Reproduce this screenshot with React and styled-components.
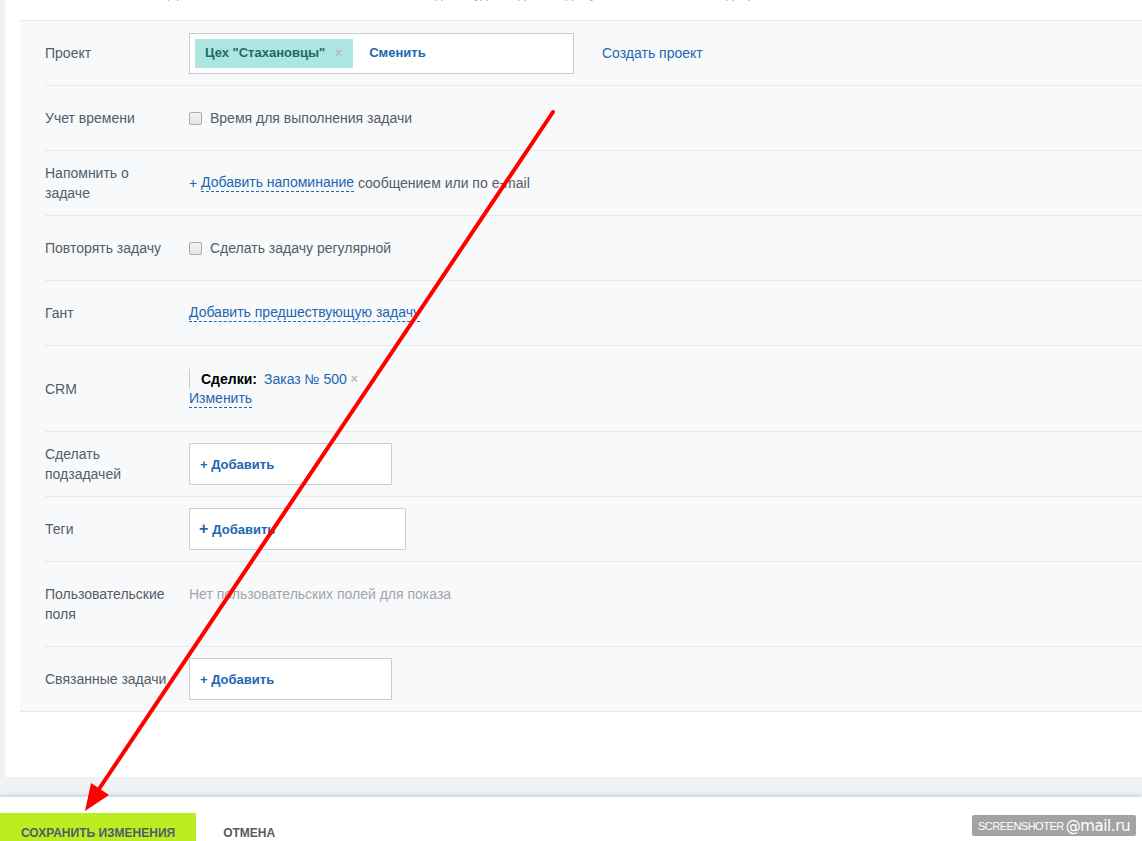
import React from "react";
import styled, { createGlobalStyle } from "styled-components";

const GlobalStyle = createGlobalStyle`
  html, body {
    margin: 0;
    padding: 0;
    background: #eef2f4;
    font-family: "Liberation Sans", Arial, "Helvetica Neue", sans-serif;
    font-size: 14px;
    color: #535c69;
    overflow: hidden;
  }
  * { box-sizing: border-box; }
`;

const Page = styled.div`
  position: relative;
  display: flex;
  flex-direction: column;
  height: 841px;
  overflow: hidden;
`;

const Workarea = styled.div`
  padding: 0 0 20px 5px;
`;

const Card = styled.div`
  background: #fff;
  padding: 0 0 65px 15px;
`;

const Hint = styled.div`
  margin: -15px 0 17px 145px;
  line-height: 18px;
  font-size: 13px;
  color: #a1a6ac;
  white-space: nowrap;
`;

const Form = styled.div`
  background: #f8f9fa;
  border-top: 1px solid #e6e9ec;
  border-bottom: 1px solid #e6e9ec;
`;

const Row = styled.div`
  display: flex;
  align-items: center;
  margin-left: 25px;
  min-height: ${(p) => p.$h || 65}px;
  border-bottom: ${(p) => (p.$last ? "none" : "1px solid #e6e9ec")};
`;

const Label = styled.div`
  flex: 0 0 144px;
  padding-right: 16px;
  line-height: 20px;
  color: #535c69;
`;

const Content = styled.div`
  display: flex;
  align-items: ${(p) => (p.$top ? "flex-start" : "center")};
  flex-wrap: wrap;
  line-height: 20px;
  min-height: ${(p) => p.$minH || 0}px;
`;

const InputBox = styled.div`
  display: flex;
  align-items: center;
  width: 385px;
  height: 41px;
  padding: 0 5px;
  background: #fff;
  border: 1px solid #c6cdd3;
`;

const Tag = styled.span`
  display: inline-flex;
  align-items: center;
  height: 29px;
  padding: 0 11px 0 10px;
  background: #abe6e0;
  color: #1f6a64;
  font-size: 13px;
  font-weight: bold;
`;

const Remove = styled.span`
  margin-left: ${(p) => p.$gap || 10}px;
  color: #b6bbc0;
  font-size: 12px;
  font-weight: bold;
`;

const Link = styled.a`
  color: #2067b0;
  text-decoration: none;
  cursor: pointer;
  font-size: ${(p) => (p.$bold ? 13 : 14)}px;
  font-weight: ${(p) => (p.$bold ? "bold" : "normal")};
  margin-left: ${(p) => p.$ml || 0}px;
`;

const DashLink = styled.a`
  color: #2067b0;
  text-decoration: none;
  border-bottom: 1px dashed #2067b0;
  line-height: 17px;
  cursor: pointer;
`;

const Checkbox = styled.span`
  display: inline-block;
  width: 13px;
  height: 13px;
  margin-right: 8px;
  border: 1px solid #a9adb2;
  border-radius: 2px;
  background: linear-gradient(#f4f4f4, #e4e4e4);
`;

const Muted = styled.span`
  color: ${(p) => (p.$light ? "#a1a6ac" : "#535c69")};
  white-space: pre;
`;

const CrmBlock = styled.div`
  display: flex;
  flex-direction: column;
  align-items: flex-start;
`;

const CrmLine = styled.div`
  display: flex;
  align-items: center;
  height: 20px;
  padding-left: 11px;
  margin-bottom: 1px;
  border-left: 1px solid #c8ccd0;
`;

const CrmTitle = styled.span`
  color: #000;
  font-weight: bold;
  margin-right: 7px;
`;

const AddBox = styled.div`
  display: flex;
  align-items: center;
  width: ${(p) => p.$w || 203}px;
  height: 42px;
  padding-left: ${(p) => p.$pl || 10}px;
  background: #fff;
  border: 1px solid #c6cdd3;
  border-radius: 1px;
`;

const Plus = styled.span`
  font-size: ${(p) => (p.$big ? 16 : 13)}px;
  margin-right: 4px;
`;

const Footer = styled.div`
  position: relative;
  flex: 1;
  display: flex;
  align-items: flex-start;
  padding-top: 16px;
  background: #fff;
  box-shadow: 0 -2px 4px rgba(0, 0, 0, 0.12);
`;

const SaveButton = styled.button`
  height: 39px;
  padding: 0 21px;
  border: none;
  background: #bbed21;
  color: #535c69;
  font-family: inherit;
  font-size: 12px;
  font-weight: bold;
  text-transform: uppercase;
`;

const CancelButton = styled.button`
  height: 39px;
  padding: 0 0 0 27px;
  border: none;
  background: none;
  color: #535c69;
  font-family: inherit;
  font-size: 12px;
  font-weight: bold;
  text-transform: uppercase;
`;

const Watermark = styled.div`
  position: absolute;
  right: 6px;
  top: 18px;
  display: flex;
  align-items: center;
  width: 164px;
  height: 21px;
  padding: 0 6px;
  border-radius: 2px;
  background: #a3a3a3;
  color: #fff;
  white-space: nowrap;
  overflow: hidden;
`;

const MarkSmall = styled.span`
  font-family: "Liberation Sans", sans-serif;
  font-size: 11px;
  letter-spacing: -0.5px;
`;

const MarkBig = styled.span`
  font-family: "DejaVu Sans", sans-serif;
  font-size: 15px;
  margin-left: 2px;
  letter-spacing: -0.4px;
`;

const Overlay = styled.svg`
  position: absolute;
  left: 0;
  top: 0;
  width: 1142px;
  height: 841px;
  pointer-events: none;
`;

export default function App() {
  return (
    <Page>
      <GlobalStyle />
      <Workarea>
        <Card>
          <Hint>(при наличии нескольких соисполнителей задача будет видна каждому из них в их списке задач)</Hint>
          <Form>
            <Row>
              <Label>Проект</Label>
              <Content>
                <InputBox>
                  <Tag>
                    Цех "Стахановцы"
                    <Remove>×</Remove>
                  </Tag>
                  <Link $bold $ml={16}>Сменить</Link>
                </InputBox>
                <Link $ml={28}>Создать проект</Link>
              </Content>
            </Row>
            <Row>
              <Label>Учет времени</Label>
              <Content>
                <Checkbox />
                <Muted>Время для выполнения задачи</Muted>
              </Content>
            </Row>
            <Row>
              <Label>Напомнить о задаче</Label>
              <Content>
                <Link>+&nbsp;</Link>
                <DashLink>Добавить напоминание</DashLink>
                <Muted> сообщением или по e-mail</Muted>
              </Content>
            </Row>
            <Row>
              <Label>Повторять задачу</Label>
              <Content>
                <Checkbox />
                <Muted>Сделать задачу регулярной</Muted>
              </Content>
            </Row>
            <Row>
              <Label>Гант</Label>
              <Content>
                <DashLink>Добавить предшествующую задачу</DashLink>
              </Content>
            </Row>
            <Row $h={86}>
              <Label>CRM</Label>
              <CrmBlock>
                <CrmLine>
                  <CrmTitle>Сделки:</CrmTitle>
                  <Link>Заказ № 500</Link>
                  <Remove $gap={4}>×</Remove>
                </CrmLine>
                <DashLink>Изменить</DashLink>
              </CrmBlock>
            </Row>
            <Row>
              <Label>Сделать подзадачей</Label>
              <AddBox>
                <Link $bold>+ Добавить</Link>
              </AddBox>
            </Row>
            <Row>
              <Label>Теги</Label>
              <AddBox $w={217} $pl={9}>
                <Link $bold>
                  <Plus $big>+</Plus>Добавить
                </Link>
              </AddBox>
            </Row>
            <Row $h={85}>
              <Label>Пользовательские поля</Label>
              <Content $minH={40} $top>
                <Muted $light>Нет пользовательских полей для показа</Muted>
              </Content>
            </Row>
            <Row $last $h={64}>
              <Label>Связанные задачи</Label>
              <AddBox>
                <Link $bold>+ Добавить</Link>
              </AddBox>
            </Row>
          </Form>
        </Card>
      </Workarea>
      <Footer>
        <SaveButton>Сохранить изменения</SaveButton>
        <CancelButton>Отмена</CancelButton>
        <Watermark>
          <MarkSmall>SCREENSHOTER</MarkSmall>
          <MarkBig>@mail.ru</MarkBig>
        </Watermark>
      </Footer>
      <Overlay viewBox="0 0 1142 841">
        <line x1="553" y1="112" x2="97" y2="792" stroke="#ff0000" strokeWidth="4" strokeLinecap="round" />
        <polygon points="85,811 91,783 109,795" fill="#ff0000" />
      </Overlay>
    </Page>
  );
}
